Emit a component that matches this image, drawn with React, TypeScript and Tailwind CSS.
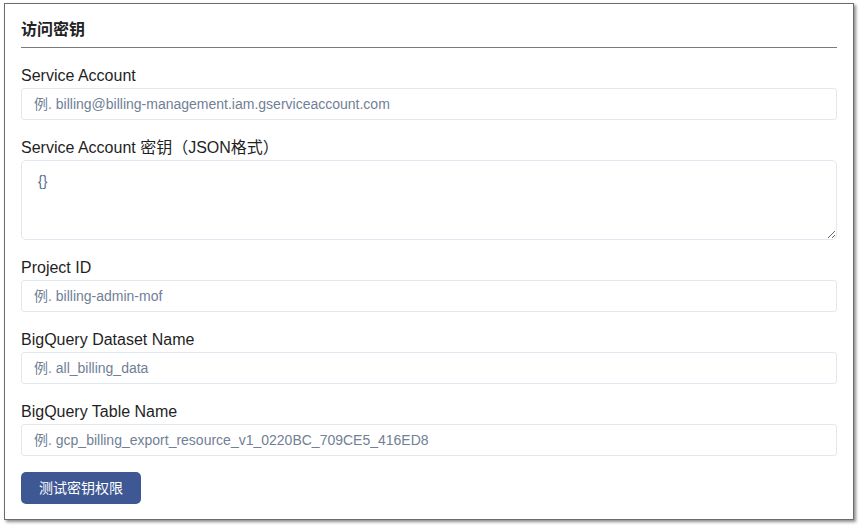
import React from "react";

const font = { fontFamily: '"Liberation Sans", Arial, "Noto Sans CJK SC", sans-serif' };

function Field({ label, placeholder }: { label: string; placeholder: string }) {
  return (
    <div className="flex flex-col">
      <label className="text-base leading-6 text-[#1f1f1f]">{label}</label>
      <input
        className="h-8 w-full rounded-[3px] border border-[#e2e8f0] bg-white px-3 text-sm text-[#4a5568] placeholder:text-[#718096] outline-none"
        placeholder={placeholder}
        style={font}
      />
    </div>
  );
}

export default function App() {
  return (
    <div className="bg-white w-[859px] h-[527px] pt-[3px] pl-[4px]" style={font}>
      <div className="w-[850px] h-[517px] border border-[#6b6b6b] bg-white shadow-[2px_2px_3px_rgba(0,0,0,0.45)] px-4 pt-[14px]">
        <div className="border-b border-[#7a7a7a] pb-[5px] text-base leading-6 font-bold text-[#222]">访问密钥</div>
        <div className="mt-4 flex flex-col gap-4">
          <Field label="Service Account" placeholder="例. billing@billing-management.iam.gserviceaccount.com" />
          <div className="flex flex-col">
            <label className="text-base leading-6 text-[#1f1f1f]">Service Account 密钥（JSON格式）</label>
            <textarea
              className="h-20 w-full rounded-[5px] border border-[#e2e8f0] bg-white px-4 py-[10px] text-sm leading-5 text-[#5a6b88] outline-none"
              defaultValue="{}"
              style={font}
            />
          </div>
          <Field label="Project ID" placeholder="例. billing-admin-mof" />
          <Field label="BigQuery Dataset Name" placeholder="例. all_billing_data" />
          <Field label="BigQuery Table Name" placeholder="例. gcp_billing_export_resource_v1_0220BC_709CE5_416ED8" />
          <div>
            <button className="h-8 w-[120px] rounded-[5px] bg-[#3d5893] text-sm text-white" style={font}>
              测试密钥权限
            </button>
          </div>
        </div>
      </div>
    </div>
  );
}
